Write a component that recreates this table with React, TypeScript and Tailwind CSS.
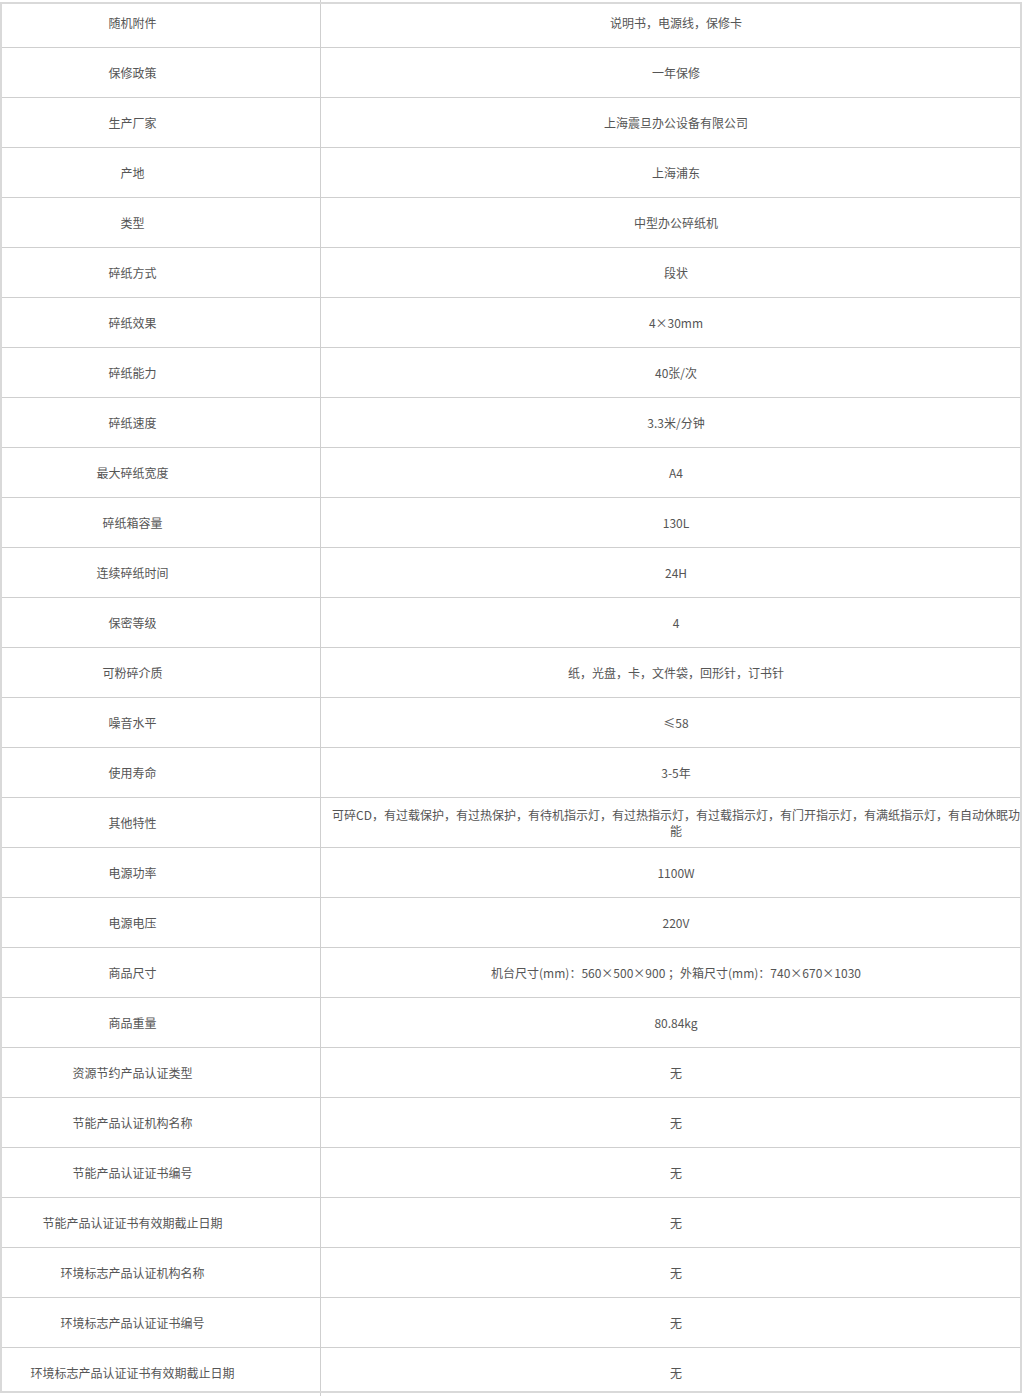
import React from "react";

const rows: [string, string][] = [
  ["随机附件", "说明书，电源线，保修卡"],
  ["保修政策", "一年保修"],
  ["生产厂家", "上海震旦办公设备有限公司"],
  ["产地", "上海浦东"],
  ["类型", "中型办公碎纸机"],
  ["碎纸方式", "段状"],
  ["碎纸效果", "4×30mm"],
  ["碎纸能力", "40张/次"],
  ["碎纸速度", "3.3米/分钟"],
  ["最大碎纸宽度", "A4"],
  ["碎纸箱容量", "130L"],
  ["连续碎纸时间", "24H"],
  ["保密等级", "4"],
  ["可粉碎介质", "纸，光盘，卡，文件袋，回形针，订书针"],
  ["噪音水平", "≤58"],
  ["使用寿命", "3-5年"],
  ["其他特性", "可碎CD，有过载保护，有过热保护，有待机指示灯，有过热指示灯，有过载指示灯，有门开指示灯，有满纸指示灯，有自动休眠功能"],
  ["电源功率", "1100W"],
  ["电源电压", "220V"],
  ["商品尺寸", "机台尺寸(mm)：560×500×900 ；外箱尺寸(mm)：740×670×1030"],
  ["商品重量", "80.84kg"],
  ["资源节约产品认证类型", "无"],
  ["节能产品认证机构名称", "无"],
  ["节能产品认证证书编号", "无"],
  ["节能产品认证证书有效期截止日期", "无"],
  ["环境标志产品认证机构名称", "无"],
  ["环境标志产品认证证书编号", "无"],
  ["环境标志产品认证证书有效期截止日期", "无"],
];

export default function App() {
  const last = rows.length - 1;
  return (
    <div
      className="w-[1023px] bg-white text-[12px] leading-[16px] text-[#555]"
      style={{ fontFamily: '"Microsoft YaHei", "Noto Sans CJK SC", "Noto Sans", sans-serif' }}
    >
      {/* strip from previous table */}
      <div className="flex h-[2px]">
        <div className="w-[321px] border-r border-[#cfcfcf]" />
      </div>
      <div className="h-[2px] w-[1022px] bg-[#d9d9d9]" />
      <div className="w-[1022px] border-x-2 border-[#d9d9d9] overflow-hidden">
        {rows.map(([k, v], i) => {
          const first = i === 0;
          const isLast = i === last;
          const h = first ? "h-[44px]" : isLast ? "h-[43px]" : "h-[50px]";
          const pad = first ? "pb-[6px]" : isLast ? "pt-[7px]" : "";
          return (
            <div
              key={k}
              className={`flex ${h} ${isLast ? "" : "border-b border-[#cfcfcf]"}`}
            >
              <div className={`w-[319px] shrink-0 border-r border-[#cfcfcf] flex items-center justify-center pr-[57px] text-center ${pad}`}>
                {k}
              </div>
              <div className={`flex-1 min-w-0 flex items-center justify-center pl-[11px] text-center ${pad}`}>
                <span className="block w-full">{v}</span>
              </div>
            </div>
          );
        })}
      </div>
      <div className="h-[2px] w-[1022px] bg-[#d9d9d9]" />
      <div className="flex h-[3px]">
        <div className="w-[321px] border-r border-[#cfcfcf]" />
      </div>
    </div>
  );
}
